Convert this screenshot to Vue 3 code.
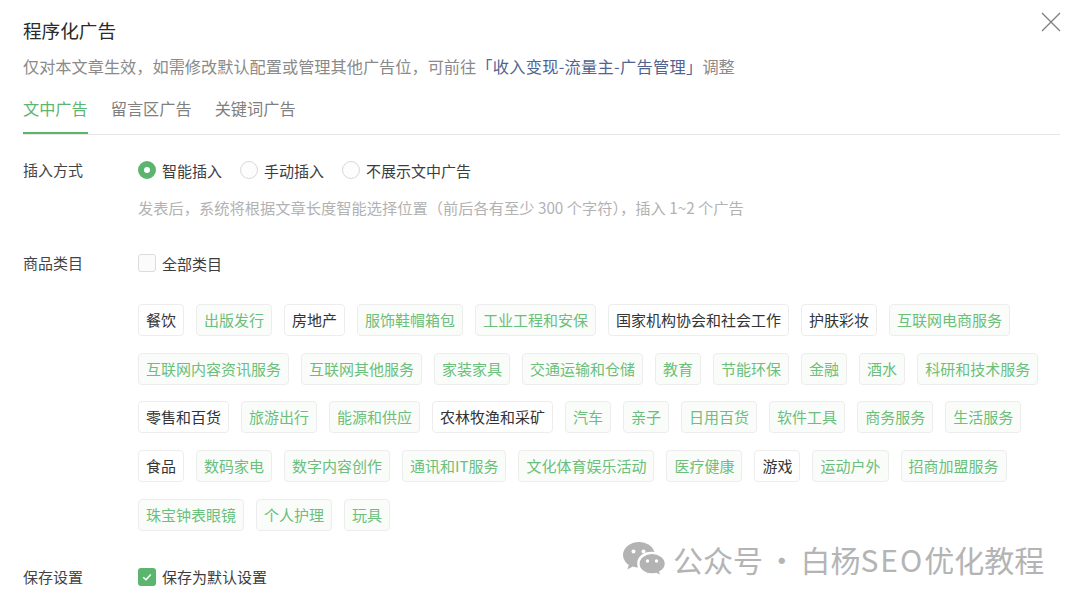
<template>
  <div class="dialog">
    <button class="close-btn">
      <svg width="20" height="20" viewBox="0 0 20 20"><path d="M1 1L19 19M19 1L1 19" stroke="#7f7f7f" stroke-width="1.3" fill="none" /></svg>
    </button>
    <h1 class="title">程序化广告</h1>
    <p class="subtitle">仅对本文章生效，如需修改默认配置或管理其他广告位，可前往<span class="link">「收入变现-流量主-广告管理」</span>调整</p>

    <div class="tabs">
      <div v-for="(tab, index) in tabs" :key="tab" :class="['tab', { active: index === 0 }]">{{ tab }}</div>
    </div>

    <div class="form-row insert-row">
      <div class="form-label">插入方式</div>
      <div class="form-body">
        <div class="radio-group">
          <label v-for="(opt, index) in insertOptions" :key="opt" class="radio">
            <span :class="['radio-dot', { checked: index === 0 }]"></span>
            {{ opt }}
          </label>
        </div>
        <p class="hint">发表后，系统将根据文章长度智能选择位置（前后各有至少 300 个字符），插入 1~2 个广告</p>
      </div>
    </div>

    <div class="form-row category-row">
      <div class="form-label">商品类目</div>
      <div class="form-body">
        <label class="check">
          <span class="check-box"></span>
          全部类目
        </label>
        <div class="tag-list">
          <span v-for="tag in tags" :key="tag.name" :class="['tag', { selected: tag.on }]">{{ tag.name }}</span>
        </div>
      </div>
    </div>

    <div class="form-row save-row">
      <div class="form-label">保存设置</div>
      <div class="form-body">
        <label class="check">
          <span class="check-box checked">
            <svg width="12" height="12" viewBox="0 0 12 12"><path d="M2.2 6.2L5 8.8L9.8 3.4" stroke="#fff" stroke-width="1.5" fill="none" /></svg>
          </span>
          保存为默认设置
        </label>
      </div>
    </div>

    <div class="watermark">
      <svg width="43" height="34" viewBox="0 0 43 34">
        <path d="M16 0C7.2 0 0 5.800 0 13c0 4 2.200 7.600 5.800 10L4.400 27.500L9.800 24.600C11.500 25.200 13.200 25.500 15 25.600C14.400 24.200 14.200 22.800 14.200 21.500C14.200 14.500 21 9.500 29 9.800L31.500 10C29.800 4.200 23.500 0 16 0Z" fill="#b3b3b3" />
        <path d="M29 11.500C21.800 11.500 16 16.100 16 21.700C16 27.300 21.800 31.900 29 31.900C30.500 31.900 31.900 31.700 33.200 31.300L37.800 33.800L36.700 29.800C40.200 27.900 42.300 25 42.300 21.700C42.300 16.100 36.300 11.500 29 11.500Z" fill="#b3b3b3" stroke="#fff" stroke-width="1.200" />
        <circle cx="10.500" cy="9.500" r="2" fill="#fff" />
        <circle cx="20.500" cy="9.500" r="2" fill="#fff" />
        <circle cx="24.500" cy="19" r="1.700" fill="#fff" />
        <circle cx="33.500" cy="19" r="1.700" fill="#fff" />
      </svg>
      <span class="watermark-text">公众号 · 白杨<span class="latin">SEO</span>优化教程</span>
    </div>
  </div>
</template>

<script setup>
const tabs = ['文中广告', '留言区广告', '关键词广告']
const insertOptions = ['智能插入', '手动插入', '不展示文中广告']

const plain = ['餐饮', '房地产', '国家机构协会和社会工作', '护肤彩妆', '零售和百货', '农林牧渔和采矿', '食品', '游戏']
const tags = [
  '餐饮', '出版发行', '房地产', '服饰鞋帽箱包', '工业工程和安保', '国家机构协会和社会工作', '护肤彩妆', '互联网电商服务',
  '互联网内容资讯服务', '互联网其他服务', '家装家具', '交通运输和仓储', '教育', '节能环保', '金融', '酒水', '科研和技术服务',
  '零售和百货', '旅游出行', '能源和供应', '农林牧渔和采矿', '汽车', '亲子', '日用百货', '软件工具', '商务服务', '生活服务',
  '食品', '数码家电', '数字内容创作', '通讯和IT服务', '文化体育娱乐活动', '医疗健康', '游戏', '运动户外', '招商加盟服务',
  '珠宝钟表眼镜', '个人护理', '玩具'
].map(name => ({ name, on: !plain.includes(name) }))
</script>

<style>
html, body {
  background: #fff;
  overflow: hidden;
}
</style>

<style scoped>
.dialog {
  position: relative;
  width: 1080px;
  height: 604px;
  box-sizing: border-box;
  padding: 17px 20px 0 23px;
  overflow: hidden;
  background: #fff;
  color: #353535;
  font-family: "Noto Sans CJK SC", "Noto Sans", sans-serif;
  font-size: 15px;
}

.close-btn {
  position: absolute;
  top: 12px;
  right: 19px;
  padding: 0;
  border: none;
  background: none;
  line-height: 0;
}

.title {
  margin: 0;
  font-size: 18.600px;
  font-weight: 400;
  line-height: 26px;
  color: #2a2a2a;
}

.subtitle {
  margin: 10px 0 0;
  font-size: 16.200px;
  line-height: 26px;
  color: #8a8a8a;
}

.link {
  color: #50648f;
  letter-spacing: 0.3px;
}

.tabs {
  display: flex;
  gap: 23px;
  margin-top: 16px;
  height: 39px;
  border-bottom: 1px solid #e7e7e7;
}

.tab {
  height: 39px;
  box-sizing: border-box;
  font-size: 16.200px;
  line-height: 26px;
  color: #7f7f7f;
}

.tab.active {
  color: #5cb56f;
  border-bottom: 2px solid #5cb56f;
}

.form-row {
  display: flex;
}

.form-label {
  width: 115px;
  flex-shrink: 0;
  line-height: 24px;
  color: #444;
}

.form-body {
  flex: 1;
}

.insert-row {
  margin-top: 23px;
}

.category-row {
  margin-top: 32px;
}

.save-row {
  margin-top: 34px;
}

.radio-group {
  display: flex;
  gap: 18px;
}

.radio,
.check {
  display: flex;
  align-items: center;
  gap: 6px;
  height: 24px;
  color: #3d3d3d;
}

.radio-dot {
  width: 18px;
  height: 18px;
  box-sizing: border-box;
  border: 1px solid #d9d9d9;
  border-radius: 50%;
  background: #fdfdfd;
}

.radio-dot.checked {
  border: 6px solid #5cb56f;
  background: #fff;
}

.hint {
  margin: 13px 0 0;
  font-size: 15.250px;
  line-height: 24px;
  color: #b2b2b2;
}

.check-box {
  display: flex;
  align-items: center;
  justify-content: center;
  width: 18px;
  height: 18px;
  box-sizing: border-box;
  border: 1px solid #dcdcdc;
  border-radius: 3px;
  background: #fbfbfb;
}

.check-box.checked {
  border: none;
  background: #5cb56f;
}

.tag-list {
  display: flex;
  flex-wrap: wrap;
  gap: 16.700px 12px;
  margin-top: 29px;
}

.tag {
  height: 32px;
  box-sizing: border-box;
  padding: 0 7px;
  border: 1px solid #ededed;
  border-radius: 4px;
  background: #fff;
  line-height: 30px;
  color: #333;
  white-space: nowrap;
}

.tag.selected {
  background: #fafcfa;
  color: #6abf7b;
}

.watermark {
  position: absolute;
  left: 623px;
  top: 540px;
  display: flex;
  align-items: center;
  gap: 7px;
  font-size: 30px;
  line-height: 38px;
  color: #b4b4b4;
  white-space: nowrap;
}

.watermark-text {
  word-spacing: -3px;
}

.latin {
  letter-spacing: 2px;
}
</style>
